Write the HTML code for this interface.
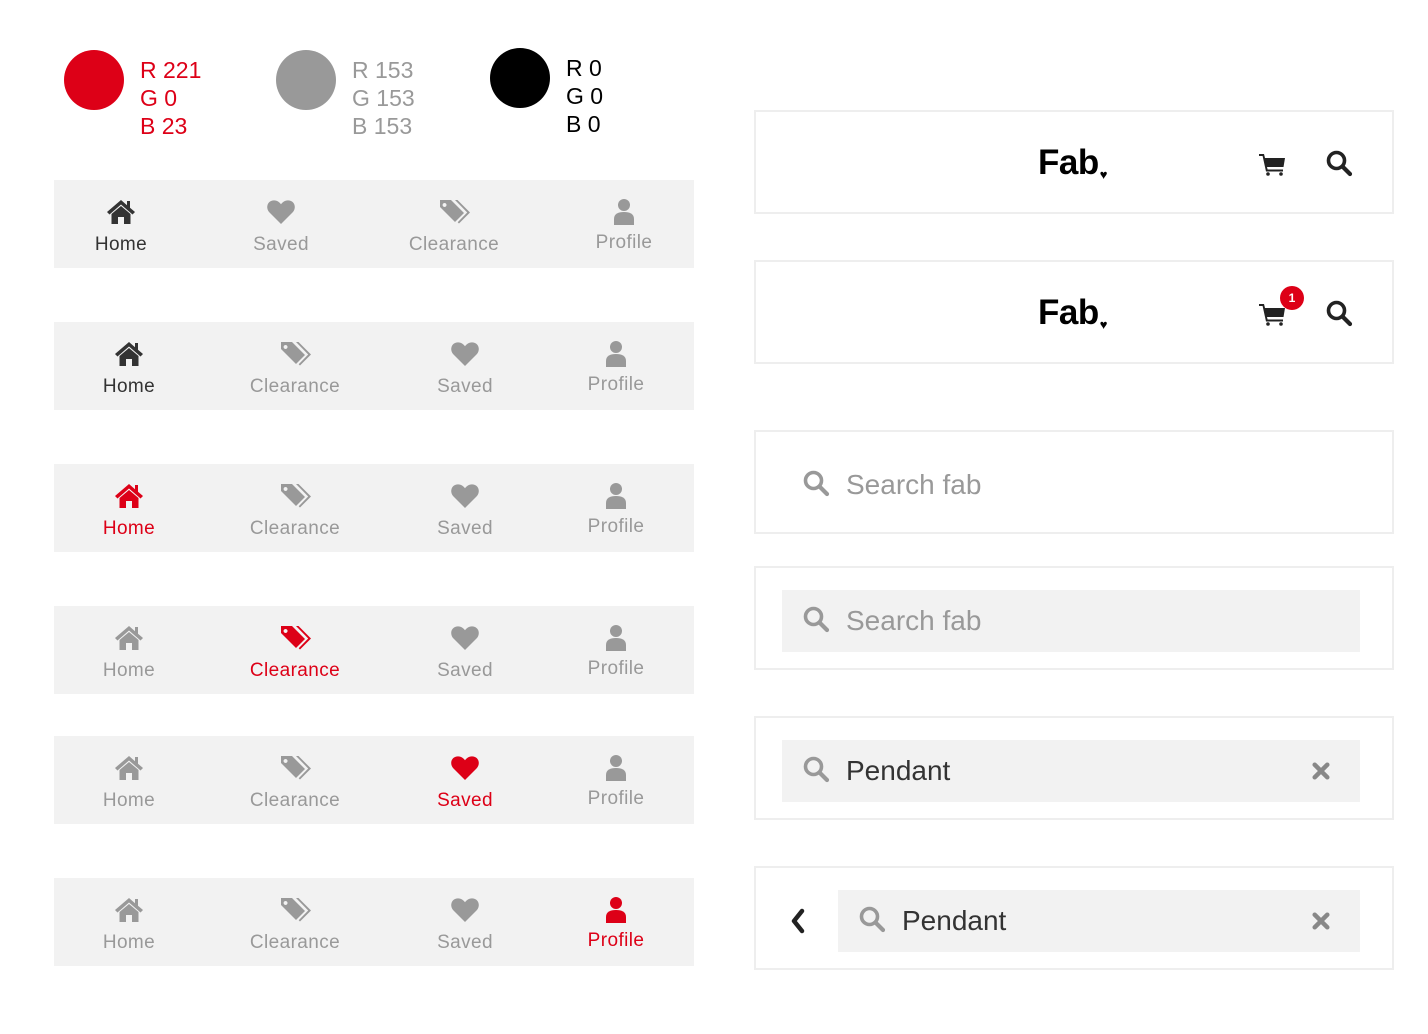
<!DOCTYPE html>
<html><head><meta charset="utf-8">
<style>
body{margin:0;width:1428px;height:1034px;background:#fff;position:relative;font-family:"Liberation Sans",sans-serif;overflow:hidden}
.a{position:absolute}
.dot{position:absolute;width:60px;height:60px;border-radius:50%}
.rgb{position:absolute;font-size:23px;line-height:28px}
.bar{position:absolute;left:54px;width:640px;height:88px;background:#f2f2f2}
.it{position:absolute;top:0;width:160px;margin-left:-80px;text-align:center;color:#999;font-size:19px}
.it svg{position:absolute;top:18px;left:64px;width:32px;height:28px}
.it span{position:absolute;left:0;right:0;top:54px;letter-spacing:0.4px}
.dk{color:#333}.rd{color:#dd0017}
.box{position:absolute;left:754px;width:636px;height:100px;border:2px solid #eee;background:#fff}
.fld{position:absolute;background:#f2f2f2;height:62px}
.st{position:absolute;font-size:28px}
.fab{position:absolute;left:282px;top:31px;font-size:35px;font-weight:bold;color:#000;letter-spacing:-0.5px}
.fab span{font-size:13px;position:relative;top:5px;margin-left:1px}
</style></head><body>
<svg width="0" height="0" style="position:absolute">
<defs>
<symbol id="home" viewBox="0 0 32 28"><path d="M16 2 L2 14 L4.5 16.5 L16 6.5 L27.5 16.5 L30 14 L25 9.7 V3 H22 V7.2 Z M6.5 16 L16 8 L25.5 16 V26 H19 V19 H13 V26 H6.5 Z" fill="currentColor"/></symbol>
<symbol id="heart" viewBox="0 0 32 28"><path d="M16 26 L4.5 14.5 C1 11 1.5 5 6 3 C10 1.3 13.5 3 16 6.2 C18.5 3 22 1.3 26 3 C30.5 5 31 11 27.5 14.5 Z" fill="currentColor"/></symbol>
<symbol id="tag" viewBox="0 0 32 28"><path d="M2 2 H13 L26 15 L17 24 L2 9 Z M6.5 5 a2 2 0 1 0 0.1 0 Z" fill="currentColor" fill-rule="evenodd"/><path d="M17 2 H19.5 L32 14.5 L21 25.5 L19.7 24.2 L29.2 14.5 Z" fill="currentColor"/></symbol>
<symbol id="user" viewBox="0 0 32 28"><circle cx="16" cy="7" r="6" fill="currentColor"/><path d="M6 27 V21 C6 16 10 14 16 14 C22 14 26 16 26 21 V27 Z" fill="currentColor"/></symbol>
<symbol id="srch" viewBox="0 0 28 28"><circle cx="11.5" cy="11.5" r="8" fill="none" stroke="currentColor" stroke-width="3.6"/><path d="M17.5 17.5 L25 25" stroke="currentColor" stroke-width="4.2" stroke-linecap="round"/></symbol>
<symbol id="cart" viewBox="0 0 28 24"><path d="M1 2 H6 L7 6 H27 L25.5 15 H9 L9.6 17.5 H25 V19.5 H8 L4.6 4 H1 Z" fill="currentColor"/><circle cx="10" cy="22" r="1.8" fill="currentColor"/><circle cx="23" cy="22" r="1.8" fill="currentColor"/></symbol>
<symbol id="xx" viewBox="0 0 20 20"><path d="M3 3 L17 17 M17 3 L3 17" stroke="currentColor" stroke-width="5" stroke-linecap="round"/></symbol>
</defs></svg>

<div class="dot" style="left:64px;top:50px;background:#dd0017"></div>
<div class="rgb" style="left:140px;top:56px;color:#dd0017">R 221<br>G 0<br>B 23</div>
<div class="dot" style="left:276px;top:50px;background:#999"></div>
<div class="rgb" style="left:352px;top:56px;color:#999">R 153<br>G 153<br>B 153</div>
<div class="dot" style="left:490px;top:48px;background:#000"></div>
<div class="rgb" style="left:566px;top:54px;color:#000">R 0<br>G 0<br>B 0</div>

<div class="bar" style="top:180px">
 <div class="it dk" style="left:67px"><svg><use href="#home"/></svg><span>Home</span></div>
 <div class="it" style="left:227px"><svg><use href="#heart"/></svg><span>Saved</span></div>
 <div class="it" style="left:400px"><svg><use href="#tag"/></svg><span>Clearance</span></div>
 <div class="it" style="left:570px"><svg><use href="#user"/></svg><span style="top:52px">Profile</span></div>
</div>
<div class="bar" style="top:322px">
 <div class="it dk" style="left:75px"><svg><use href="#home"/></svg><span>Home</span></div>
 <div class="it" style="left:241px"><svg><use href="#tag"/></svg><span>Clearance</span></div>
 <div class="it" style="left:411px"><svg><use href="#heart"/></svg><span>Saved</span></div>
 <div class="it" style="left:562px"><svg><use href="#user"/></svg><span style="top:52px">Profile</span></div>
</div>
<div class="bar" style="top:464px">
 <div class="it rd" style="left:75px"><svg><use href="#home"/></svg><span>Home</span></div>
 <div class="it" style="left:241px"><svg><use href="#tag"/></svg><span>Clearance</span></div>
 <div class="it" style="left:411px"><svg><use href="#heart"/></svg><span>Saved</span></div>
 <div class="it" style="left:562px"><svg><use href="#user"/></svg><span style="top:52px">Profile</span></div>
</div>
<div class="bar" style="top:606px">
 <div class="it" style="left:75px"><svg><use href="#home"/></svg><span>Home</span></div>
 <div class="it rd" style="left:241px"><svg><use href="#tag"/></svg><span>Clearance</span></div>
 <div class="it" style="left:411px"><svg><use href="#heart"/></svg><span>Saved</span></div>
 <div class="it" style="left:562px"><svg><use href="#user"/></svg><span style="top:52px">Profile</span></div>
</div>
<div class="bar" style="top:736px">
 <div class="it" style="left:75px"><svg><use href="#home"/></svg><span>Home</span></div>
 <div class="it" style="left:241px"><svg><use href="#tag"/></svg><span>Clearance</span></div>
 <div class="it rd" style="left:411px"><svg><use href="#heart"/></svg><span>Saved</span></div>
 <div class="it" style="left:562px"><svg><use href="#user"/></svg><span style="top:52px">Profile</span></div>
</div>
<div class="bar" style="top:878px">
 <div class="it" style="left:75px"><svg><use href="#home"/></svg><span>Home</span></div>
 <div class="it" style="left:241px"><svg><use href="#tag"/></svg><span>Clearance</span></div>
 <div class="it" style="left:411px"><svg><use href="#heart"/></svg><span>Saved</span></div>
 <div class="it rd" style="left:562px"><svg><use href="#user"/></svg><span style="top:52px">Profile</span></div>
</div>

<div class="box" style="top:110px">
 <div class="fab">Fab<span>&#9829;</span></div>
 <svg class="a" style="left:502px;top:40px;color:#222" width="28" height="24"><use href="#cart"/></svg>
 <svg class="a" style="left:569px;top:37px;color:#222" width="28" height="28"><use href="#srch"/></svg>
</div>
<div class="box" style="top:260px">
 <div class="fab">Fab<span>&#9829;</span></div>
 <svg class="a" style="left:502px;top:40px;color:#222" width="28" height="24"><use href="#cart"/></svg>
 <div class="a" style="left:524px;top:24px;width:24px;height:24px;border-radius:50%;background:#dd0017;color:#fff;font-size:12px;font-weight:bold;text-align:center;line-height:24px">1</div>
 <svg class="a" style="left:569px;top:37px;color:#222" width="28" height="28"><use href="#srch"/></svg>
</div>

<div class="box" style="top:430px">
 <svg class="a" style="left:46px;top:37px;color:#999" width="28" height="28"><use href="#srch"/></svg>
 <div class="st" style="left:90px;top:37px;color:#999">Search fab</div>
</div>
<div class="box" style="top:566px">
 <div class="fld" style="left:26px;top:22px;width:578px"></div>
 <svg class="a" style="left:46px;top:37px;color:#999" width="28" height="28"><use href="#srch"/></svg>
 <div class="st" style="left:90px;top:37px;color:#999">Search fab</div>
</div>
<div class="box" style="top:716px">
 <div class="fld" style="left:26px;top:22px;width:578px"></div>
 <svg class="a" style="left:46px;top:37px;color:#999" width="28" height="28"><use href="#srch"/></svg>
 <div class="st" style="left:90px;top:37px;color:#333">Pendant</div>
 <svg class="a" style="left:556px;top:44px;color:#888" width="18" height="18"><use href="#xx"/></svg>
</div>
<div class="box" style="top:866px">
 <svg class="a" style="left:34px;top:40px" width="16" height="26"><path d="M12 3 L4 13 L12 23" fill="none" stroke="#222" stroke-width="4.5" stroke-linecap="round" stroke-linejoin="round"/></svg>
 <div class="fld" style="left:82px;top:22px;width:522px"></div>
 <svg class="a" style="left:102px;top:37px;color:#999" width="28" height="28"><use href="#srch"/></svg>
 <div class="st" style="left:146px;top:37px;color:#333">Pendant</div>
 <svg class="a" style="left:556px;top:44px;color:#888" width="18" height="18"><use href="#xx"/></svg>
</div>
</body></html>
